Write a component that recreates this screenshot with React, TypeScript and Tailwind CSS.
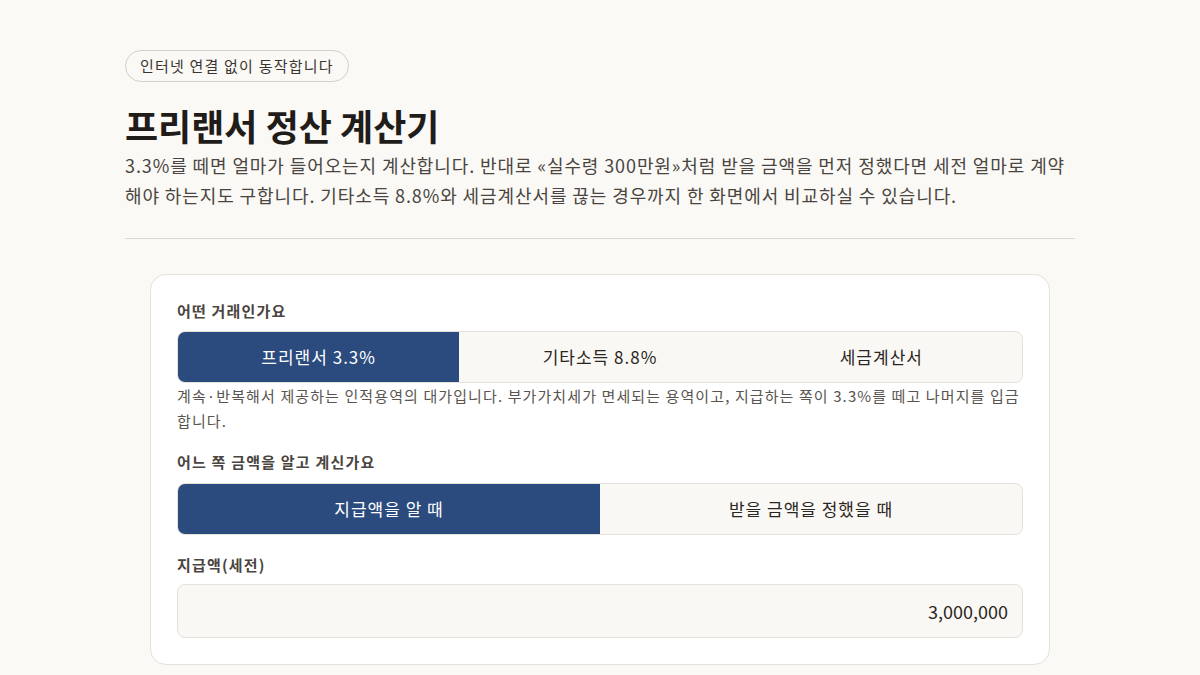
import { useState } from 'react'

const dealTypes = [
  { id: 'freelancer', label: '프리랜서 3.3%' },
  { id: 'other', label: '기타소득 8.8%' },
  { id: 'invoice', label: '세금계산서' },
]

const modes = [
  { id: 'gross', label: '지급액을 알 때' },
  { id: 'net', label: '받을 금액을 정했을 때' },
]

function Segmented({
  items,
  value,
  onChange,
}: {
  items: { id: string; label: string }[]
  value: string
  onChange: (id: string) => void
}) {
  return (
    <div className="flex h-[52px] rounded-lg border border-[#e6e1d9] bg-[#faf8f5] overflow-hidden">
      {items.map((item) => (
        <button
          key={item.id}
          onClick={() => onChange(item.id)}
          className={
            item.id === value
              ? 'flex-1 bg-[#2b4b7e] text-white text-[17px] tracking-[1px]'
              : 'flex-1 text-[#2a2622] text-[17px] tracking-[1px]'
          }
        >
          {item.label}
        </button>
      ))}
    </div>
  )
}

export default function App() {
  const [deal, setDeal] = useState('freelancer')
  const [mode, setMode] = useState('gross')

  return (
    <main
      className="min-h-screen bg-[#faf9f6] text-[#2a2622]"
      style={{ fontFamily: '"Noto Sans CJK KR", "Noto Sans", sans-serif' }}
    >
      <div className="max-w-[950px] mx-auto pt-[50px]">
        {/* 헤더 */}
        <header className="pb-[28px] border-b border-[#dcd7cf]">
          <span className="inline-flex h-8 items-center rounded-full border border-[#d6d0c6] px-[14px] text-[15px] tracking-[1.2px] text-[#3a3530]">
            인터넷 연결 없이 동작합니다
          </span>
          <h1 className="mt-[19px] text-[36px] font-bold leading-[48px] text-[#1f1c19]">
            프리랜서 정산 계산기
          </h1>
          <p className="mt-[1px] text-[18px] leading-[30px] tracking-[0.9px] text-[#4a4540]">
            3.3%를 떼면 얼마가 들어오는지 계산합니다. 반대로 «실수령 300만원»처럼 받을 금액을 먼저 정했다면 세전 얼마로 계약해야 하는지도 구합니다. 기타소득 8.8%와 세금계산서를 끊는 경우까지 한 화면에서 비교하실 수 있습니다.
          </p>
        </header>

        {/* 계산 카드 */}
        <section className="max-w-[900px] mx-auto mt-[35px] rounded-2xl border border-[#e6e1d9] bg-white p-[26px]">
          <div>
            <div className="mb-[10px] text-[15px] font-bold leading-5 tracking-[1.2px] text-[#4a4540]">어떤 거래인가요</div>
            <Segmented items={dealTypes} value={deal} onChange={setDeal} />
            <p className="text-[15px] leading-[25px] tracking-[1.1px] text-[#5a5550]">
              계속·반복해서 제공하는 인적용역의 대가입니다. 부가가치세가 면세되는 용역이고, 지급하는 쪽이 3.3%를 떼고 나머지를 입금합니다.
            </p>
          </div>

          <div className="mt-[19px]">
            <div className="mb-[11px] text-[15px] font-bold leading-5 tracking-[1.2px] text-[#4a4540]">어느 쪽 금액을 알고 계신가요</div>
            <Segmented items={modes} value={mode} onChange={setMode} />
          </div>

          <div className="mt-[20px]">
            <label className="block mb-[9px] text-[15px] font-bold leading-5 tracking-[1.2px] text-[#4a4540]">지급액(세전)</label>
            <input
              defaultValue="3,000,000"
              className="block w-full h-[54px] rounded-lg border border-[#e6e1d9] bg-[#faf8f5] px-[14px] text-right text-[18px] text-[#2a2622] outline-none"
            />
          </div>
        </section>
      </div>
    </main>
  )
}
